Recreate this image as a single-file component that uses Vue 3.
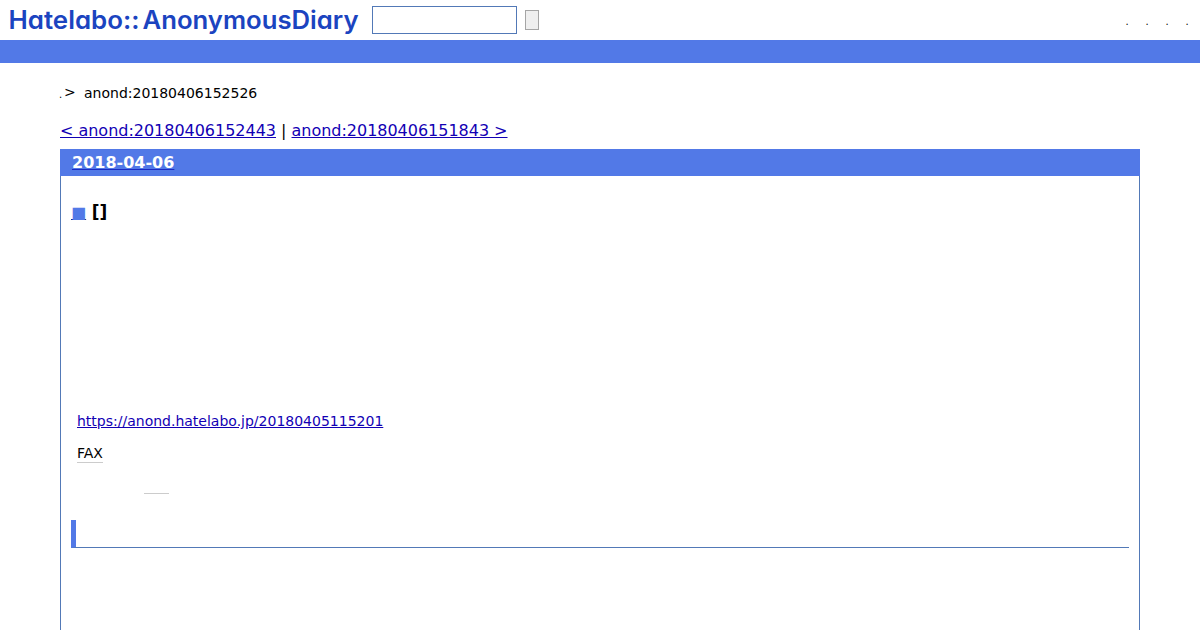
<script setup>
const menu = ['.', '.', '.', '.'];
const entry = {
  name: 'anond:20180406152526',
  prev: 'anond:20180406152443',
  next: 'anond:20180406151843',
  date: '2018-04-06',
  link: 'https://anond.hatelabo.jp/20180405115201'
};
</script>

<template>
  <header class="header">
    <svg class="logo" width="360" height="40" viewBox="0 0 360 40">
      <text x="8.5" y="28.5" textLength="131" lengthAdjust="spacingAndGlyphs">Hatelabo::</text>
      <text x="142.5" y="28.5" textLength="216" lengthAdjust="spacingAndGlyphs">AnonymousDiary</text>
    </svg>
    <form class="search" @submit.prevent>
      <input class="search-box" type="text">
      <button class="search-btn"></button>
    </form>
    <ul class="menu">
      <li v-for="(item, i) in menu" :key="i">{{ item }}</li>
    </ul>
  </header>
  <div class="bar"></div>

  <main class="content">
    <div class="breadcrumb"><span class="home">.</span><span class="sep">&gt;</span><span>{{ entry.name }}</span></div>
    <div class="pager">
      <a href="#">&lt; {{ entry.prev }}</a> | <a href="#">{{ entry.next }} &gt;</a>
    </div>
    <div class="day">
      <h2><a href="#"><span>{{ entry.date }}</span></a></h2>
      <div class="body">
        <h3><a href="#"><span class="sanchor">■</span></a> <span class="title">[]</span></h3>
        <p class="url"><a href="#">{{ entry.link }}</a></p>
        <p class="fax"><span class="keyword">FAX</span></p>
        <div class="blank-keyword"></div>
        <h4></h4>
      </div>
    </div>
  </main>
</template>

<style>
body { background: #fff; overflow: hidden; }
</style>

<style scoped>
.header, .content { font-family: 'DejaVu Sans', Verdana, sans-serif; color: #000; }
.header { display: flex; height: 40px; }
.logo { display: block; }
.logo text {
    font-family: Inter, Lato, sans-serif; font-size: 25px; font-weight: 600;
    font-feature-settings: 'cv11'; fill: #1b44c0;
}

.search { display: flex; align-items: center; gap: 8px; margin-left: 12px; }
.search-box {
    box-sizing: border-box; width: 145px; height: 28px; padding: 2px;
    border: 1px solid #5279b7; background: #fff; outline: none;
}
.search-btn {
    box-sizing: border-box; width: 14px; height: 20px; padding: 0;
    border: 1px solid #a5a5a5; background: #efefef;
}

.menu { display: flex; list-style: none; margin: 16px 11px 0 auto; padding: 0; gap: 16px; }
.menu li { width: 4px; font-size: 10px; line-height: 12px; text-align: center; }
.bar { height: 23px; background: #5279e7; }

.content { height: 546px; margin: 0 60px; padding-top: 21px; }
.breadcrumb { display: flex; font-size: 14px; line-height: 18px; }
.home { width: 4px; font-size: 10px; line-height: 22px; height: 18px; margin-left: -1px; }
.sep { width: 20px; height: 18px; margin-left: 1px; line-height: 17px; }
.pager { margin-top: 19px; font-size: 16px; line-height: 20px; letter-spacing: -0.02px; }
a { color: #0000cc; }
.pager a, .url a { color: #1200b4; }

.day { box-sizing: border-box; height: 481px; margin-top: 8px; border: 1px solid #5279b7; border-width: 0 1px; }
h2 { margin: 0 -1px; padding-left: 12px; background: #5279e7; font-size: 16px; line-height: 27px; }
h2 a { color: #1a2bc4; }
h2 span { color: #fff; }
.body { padding: 0 10px; }
h3 { height: 20px; margin: 26px 0 0; font-size: 16px; line-height: 21px; }
h3 a { color: #1c2e80; }
.sanchor { color: #5279e7; }
.title { font-size: 17px; }
p { margin: 0 6px; font-size: 14px; line-height: 18px; }
.url { margin-top: 190px; }
.fax { margin-top: 14px; }
.keyword { display: inline-block; height: 18px; border-bottom: 1px solid #ccc; }
.blank-keyword { width: 25px; height: 1px; margin: 30px 0 0 73px; background: #ccc; }
h4 {
    box-sizing: border-box; height: 28px; margin: 26px 0 0;
    border-left: 5px solid #5279e7; border-bottom: 1px solid #5279b7;
}
</style>
